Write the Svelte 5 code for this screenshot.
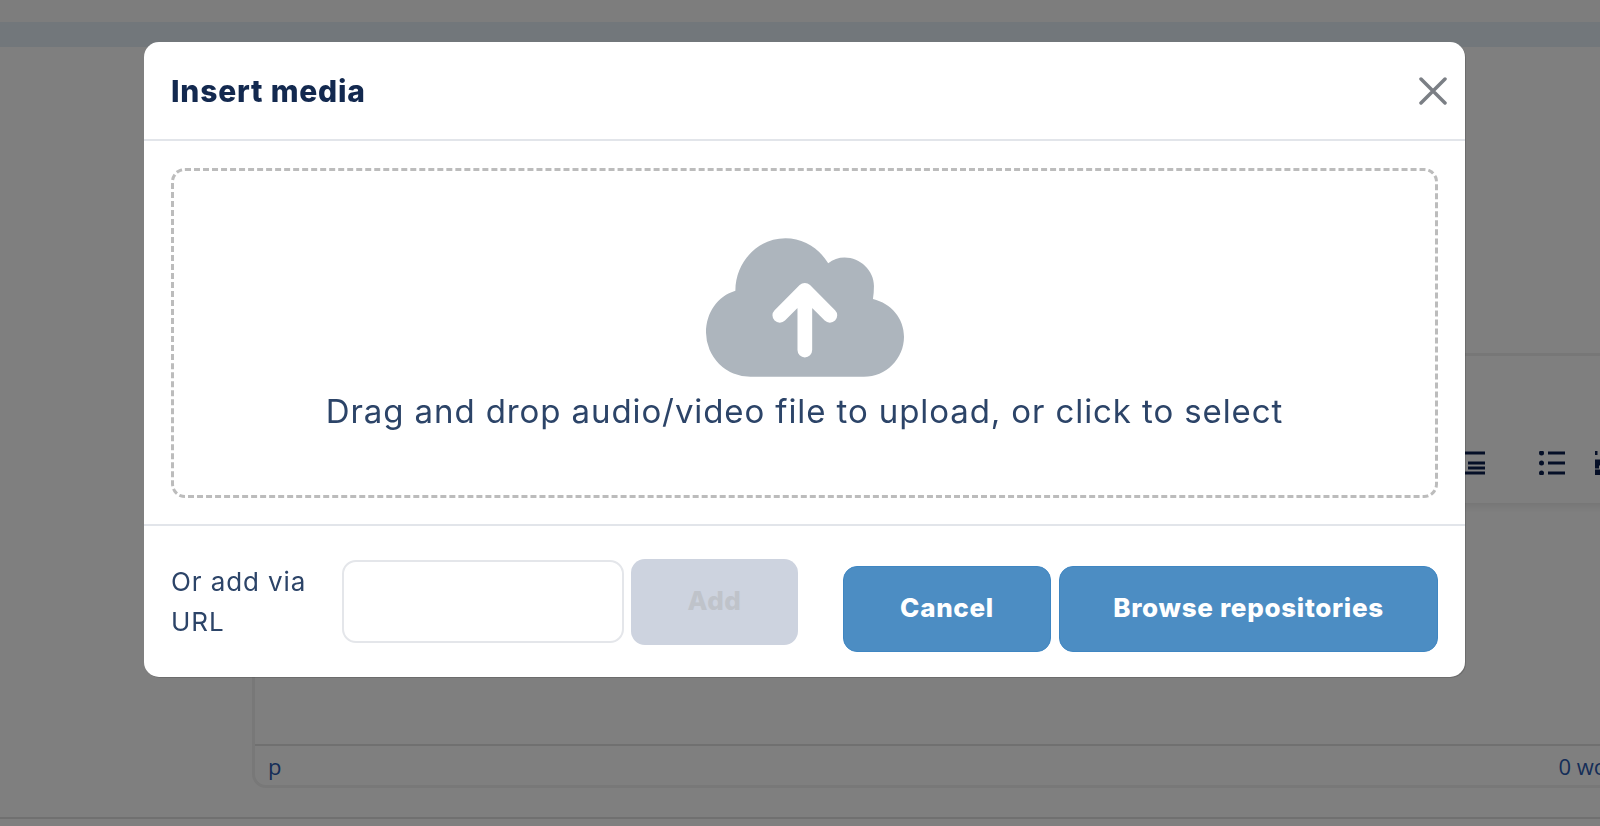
<script>
	let url = $state('');
</script>

<div class="page">
	<div class="topbar"></div>
	<div class="band"></div>
	<div class="editor">
		<div class="toolbar">
			<svg class="tool" width="30" height="24" viewBox="0 0 30 24">
				<path d="M0 2h30M13 12h17M13 17h17M0 22h30" />
				<path class="solid" d="M0 8l7 4-7 4z" />
			</svg>
			<svg class="tool" width="26" height="24" viewBox="0 0 26 24">
				<path d="M9 2h17M9 12h17M9 22h17" />
				<circle class="solid" cx="2.5" cy="2" r="2.5" />
				<circle class="solid" cx="2.5" cy="12" r="2.5" />
				<circle class="solid" cx="2.5" cy="22" r="2.5" />
			</svg>
			<svg class="tool numbered" width="26" height="24" viewBox="0 0 26 24">
				<path d="M1 0v4M0 10h4v3H0v3h4M0 20h4v3H0M4 21.500H1" stroke-width="1.500" />
				<path d="M9 2h17M9 12h17M9 22h17" />
			</svg>
		</div>
		<div class="content"></div>
		<div class="status">
			<span>p</span>
			<span class="words">0 wo</span>
		</div>
	</div>
	<div class="pagefoot"></div>
</div>

<div class="overlay">
	<div class="modal">
		<header>
			<h2>Insert media</h2>
			<button class="close" aria-label="Close">
				<svg width="28" height="28" viewBox="0 0 28 28">
					<path d="M2 2l24 24M26 2L2 26" />
				</svg>
			</button>
		</header>

		<div class="body">
			<div class="dropzone">
				<svg class="cloud" width="198" height="139" viewBox="137 55 593 415">
					<path
						d="M270 470A133 133 0 0 1 137 338C137 277 172 228 225 212C225 125 293 55 375 55C428 55 475 84 503 130C517 119 534 113 552 113C599 113 640 152 640 198C640 212 639 225 637 237C692 250 730 296 730 350C730 416 676 470 610 470Z"
					/>
					<path class="arrow" d="M433 390V215M358 286L433 211L508 286" />
				</svg>
				<p>Drag and drop audio/video file to upload, or click to select</p>
			</div>
		</div>

		<footer>
			<div class="via">
				<label for="url">Or add via URL</label>
				<input id="url" type="text" bind:value={url} />
				<button class="add" disabled>Add</button>
			</div>
			<div class="actions">
				<button class="primary cancel">Cancel</button>
				<button class="primary browse">Browse repositories</button>
			</div>
		</footer>
	</div>
</div>

<style>
	:global(body) {
		overflow: hidden;
		font-family: Inter, 'Liberation Sans', sans-serif;
	}

	.page {
		height: 826px;
		overflow: hidden;
		background: #fff;
		display: flex;
		flex-direction: column;
	}

	.topbar {
		height: 22px;
		background: #fafafa;
		flex: none;
	}

	.band {
		height: 25px;
		background: #e4eef6;
		flex: none;
	}

	.editor {
		flex: none;
		width: 1420px;
		height: 435px;
		margin: 306px 0 0 252px;
		border: 3px solid #f0f0f0;
		border-radius: 14px;
		display: flex;
		flex-direction: column;
		font-family: 'Open Sans', sans-serif;
		box-sizing: border-box;
	}

	.toolbar {
		height: 147px;
		flex: none;
		padding: 95px 0 0 1200px;
		box-sizing: border-box;
		display: flex;
		align-items: flex-start;
		gap: 54px;
		box-shadow: 0 4px 8px rgba(0, 0, 0, 0.08);
	}

	.tool {
		flex: none;
	}

	.numbered {
		margin-left: -24px;
	}

	.tool path {
		fill: none;
		stroke: #0b1f4f;
		stroke-width: 3;
	}

	.tool .solid {
		fill: #0b1f4f;
		stroke: none;
	}

	.content {
		flex: 1;
	}

	.status {
		height: 41px;
		flex: none;
		border-top: 2px solid #e0e0e0;
		padding: 0 0 0 13px;
		display: flex;
		align-items: center;
		font-size: 22px;
		color: #2a5ab0;
		box-sizing: border-box;
	}

	.words {
		margin-left: 1277px;
	}

	.pagefoot {
		flex: none;
		margin-top: 29px;
		border-top: 2px solid #e0e0e0;
	}

	/* dimmed backdrop, modal sits on top */
	.overlay {
		position: fixed;
		inset: 0;
		background: rgba(0, 0, 0, 0.5);
		padding: 42px 0 0 144px;
		box-sizing: border-box;
	}

	.modal {
		width: 1321px;
		height: 635px;
		background: #fff;
		border-radius: 15px;
		box-sizing: border-box;
		box-shadow: 1px 1px 0 rgba(0, 0, 0, 0.15);
		display: flex;
		flex-direction: column;
		color: #2c4468;
	}

	header {
		height: 99px;
		flex: none;
		padding: 0 18px 0 27px;
		border-bottom: 2px solid #e2e5ea;
		display: flex;
		align-items: center;
		justify-content: space-between;
		box-sizing: border-box;
	}

	h2 {
		margin: 0;
		font-size: 30px;
		font-weight: 800;
		color: #13294f;
		letter-spacing: 0.8px;
	}

	.close {
		border: 0;
		background: none;
		padding: 0;
		display: flex;
	}

	.close path {
		fill: none;
		stroke: #7b7f85;
		stroke-width: 3.500;
		stroke-linecap: round;
	}

	.body {
		flex: none;
		height: 385px;
		padding: 27px 27px 26px;
		border-bottom: 2px solid #e2e5ea;
		box-sizing: border-box;
	}

	.dropzone {
		height: 100%;
		box-sizing: border-box;
		border: 3px dashed #bcbcbc;
		border-radius: 14px;
		padding-top: 67px;
		display: flex;
		flex-direction: column;
		align-items: center;
	}

	.cloud {
		fill: #adb5bd;
		flex: none;
	}

	.cloud .arrow {
		fill: none;
		stroke: #fff;
		stroke-width: 44;
		stroke-linecap: round;
		stroke-linejoin: round;
	}

	.dropzone p {
		margin: 12px 0 0;
		font-size: 33px;
		line-height: 44px;
		letter-spacing: 0.9px;
		white-space: nowrap;
	}

	footer {
		flex: 1;
		padding: 0 27px;
		display: flex;
		align-items: center;
		justify-content: space-between;
	}

	.via {
		display: flex;
		align-items: center;
	}

	label {
		width: 171px;
		padding-right: 20px;
		box-sizing: border-box;
		flex: none;
		font-size: 26px;
		line-height: 40px;
		font-weight: 400;
		letter-spacing: 0.9px;
	}

	input {
		width: 282px;
		height: 83px;
		box-sizing: border-box;
		border: 2px solid #e4e6ea;
		border-radius: 14px;
		background: #fff;
		outline: none;
	}

	button {
		font-family: inherit;
	}

	.add {
		width: 167px;
		height: 86px;
		margin-left: 7px;
		padding: 0 0 2px;
		border: 0;
		border-radius: 14px;
		background: #cdd3df;
		color: #bfc3ca;
		font-size: 26px;
		font-weight: 800;
		letter-spacing: 0.6px;
	}

	.actions {
		display: flex;
		gap: 8px;
		margin-top: 14px;
	}

	.primary {
		height: 86px;
		box-sizing: border-box;
		padding: 0 0 2px;
		border: 1px solid #3f86c2;
		border-radius: 14px;
		background: #4c8dc3;
		color: #fff;
		font-size: 26px;
		font-weight: 800;
		letter-spacing: 0.7px;
	}

	.cancel {
		width: 208px;
	}

	.browse {
		width: 379px;
	}
</style>
